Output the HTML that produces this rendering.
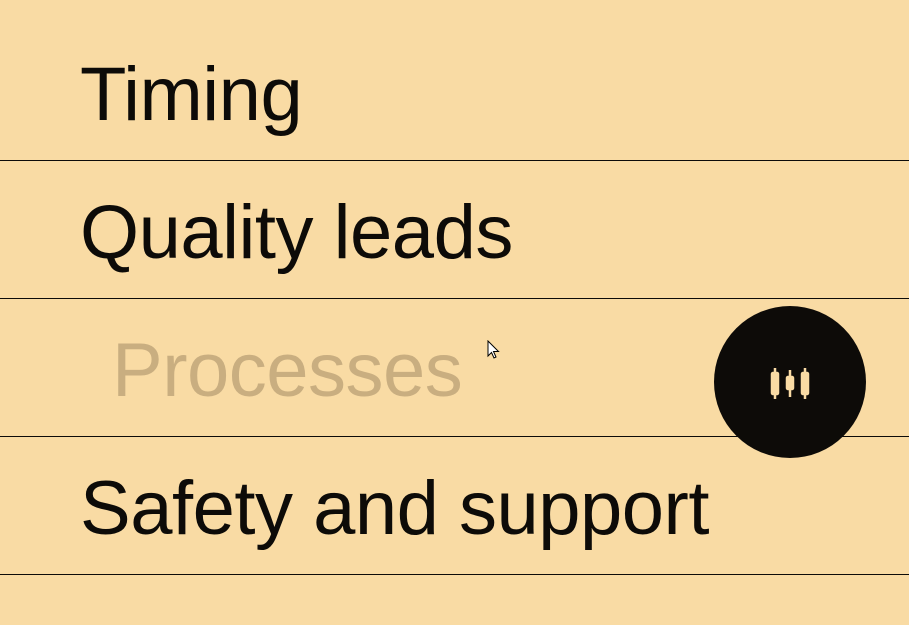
<!DOCTYPE html>
<html><head><style>
html,body{margin:0;padding:0;}
body{width:909px;height:625px;background:#f9dba4;position:relative;overflow:hidden;font-family:"Liberation Sans",sans-serif;}
.t{position:absolute;left:80px;font-size:76px;letter-spacing:-0.5px;color:#0d0b08;line-height:1;white-space:nowrap;}
.l{position:absolute;left:0;width:909px;height:1.5px;background:#0d0b08;}
.c{position:absolute;left:714px;top:306px;width:152px;height:152px;border-radius:50%;background:#0d0b08;}
</style></head><body>
<div class="t" style="top:57px">Timing</div>
<div class="l" style="top:159.5px"></div>
<div class="t" style="top:195px">Quality leads</div>
<div class="l" style="top:297.5px"></div>
<div class="t" style="top:333px;left:112px;color:#c9ae80">Processes</div>
<div class="l" style="top:435.5px"></div>
<div class="t" style="top:471px">Safety and support</div>
<div class="l" style="top:573.5px"></div>
<div class="c">
<svg width="152" height="152" viewBox="0 0 152 152">
<g fill="#f9dba4" stroke="#f9dba4" stroke-width="2.5">
<rect x="58" y="67" width="6" height="21" rx="1"/>
<line x1="61" y1="62" x2="61" y2="93"/>
<rect x="73" y="71" width="6" height="12" rx="1"/>
<line x1="76" y1="64" x2="76" y2="91"/>
<rect x="88" y="67" width="6" height="21" rx="1"/>
<line x1="91" y1="62" x2="91" y2="93"/>
</g></svg>
</div>
<svg style="position:absolute;left:487px;top:340px" width="14" height="20" viewBox="0 0 14 20"><path d="M1 1 L1 16 L4.5 12.5 L7 18 L9 17 L6.5 11.5 L11.5 11.5 Z" fill="#fff" stroke="#000" stroke-width="1"/></svg>
</body></html>
